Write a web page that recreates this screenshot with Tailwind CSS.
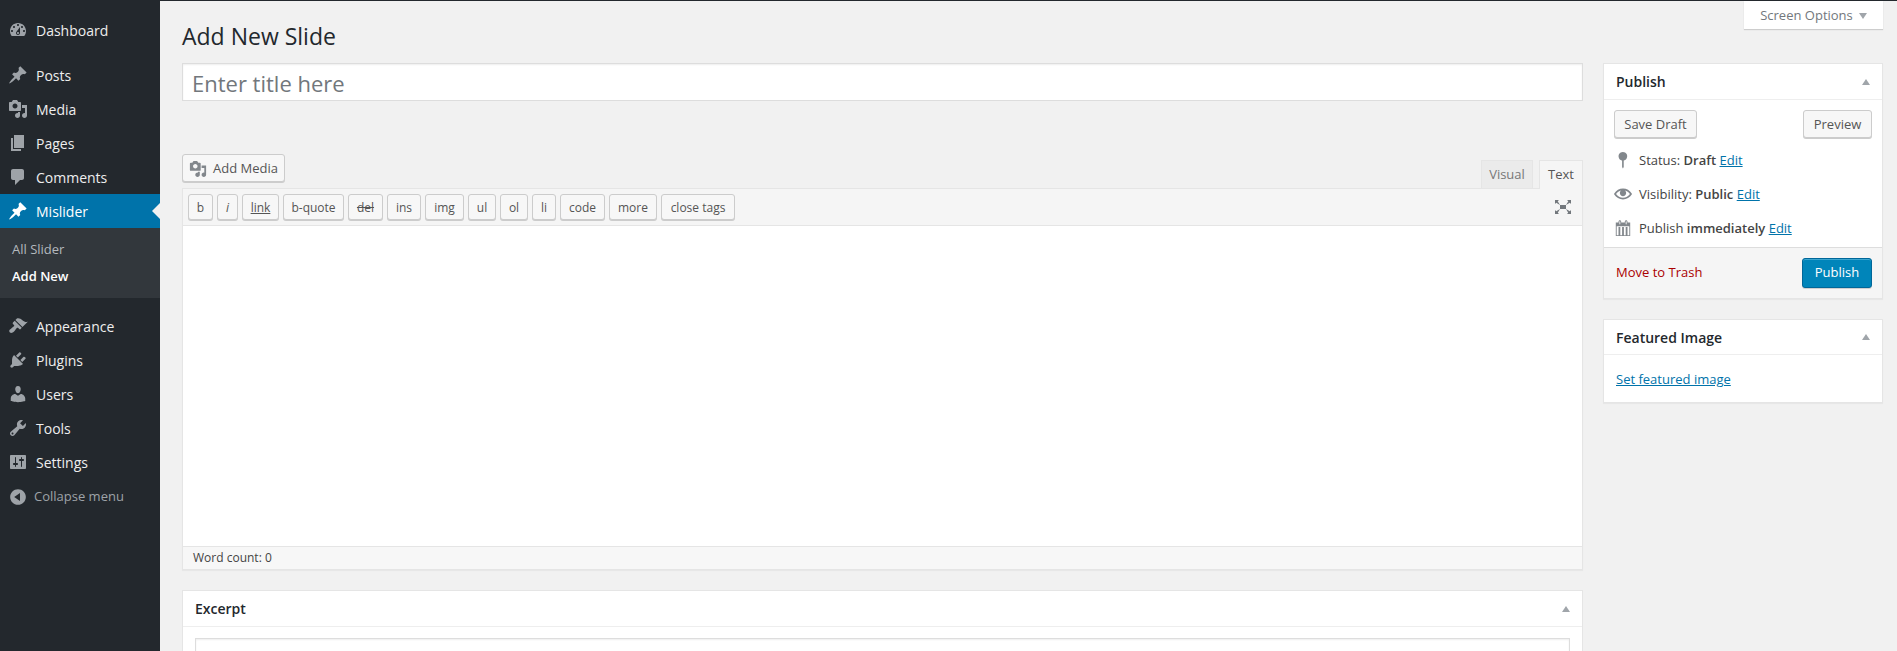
<!DOCTYPE html>
<html lang="en">
<head>
<meta charset="utf-8">
<title>Add New Slide</title>
<script src="https://cdn.jsdelivr.net/npm/@tailwindcss/browser@4"></script>
</head>
<body class="h-[651px] overflow-hidden bg-[#f1f1f1] font-['Open_Sans',sans-serif] text-[13px] text-[#444]">
<div class="h-px bg-[#23282d]"></div>
<div class="relative flex h-[650px] overflow-hidden">
  <!-- Sidebar -->
  <nav class="w-[160px] shrink-0 bg-[#23282d] pt-[12px] text-[14px] text-[#eee]">
    <a class="flex h-[34px] items-center"><svg class="ml-[8px] mr-[8px] h-[20px] w-[20px] fill-[#9ea3a8]" viewBox="0 0 20 20"><path d="M3.76 16h12.48c1.1-1.37 1.76-3.11 1.76-5 0-4.42-3.58-8-8-8s-8 3.58-8 8c0 1.89.66 3.63 1.76 5zM10 4c.55 0 1 .45 1 1s-.45 1-1 1-1-.45-1-1 .45-1 1-1zM6 6c.55 0 1 .45 1 1s-.45 1-1 1-1-.45-1-1 .45-1 1-1zm8 0c.55 0 1 .45 1 1s-.45 1-1 1-1-.45-1-1 .45-1 1-1zm-5.37 5.55L12 7v6c0 1.1-.9 2-2 2s-2-.9-2-2c0-.57.24-1.08.63-1.45zM4 10c.55 0 1 .45 1 1s-.45 1-1 1-1-.45-1-1 .45-1 1-1zm12 0c.55 0 1 .45 1 1s-.45 1-1 1-1-.45-1-1 .45-1 1-1zm-5 3c0-.55-.45-1-1-1s-1 .45-1 1 .45 1 1 1 1-.45 1-1z"/></svg>Dashboard</a>
    <a class="mt-[11px] flex h-[34px] items-center"><svg class="ml-[8px] mr-[8px] h-[20px] w-[20px] fill-[#9ea3a8]" viewBox="0 0 20 20"><path d="M10.44 3.02l1.82-1.82 6.36 6.35-1.83 1.82c-1.05-.68-2.48-.57-3.41.36l-.75.75c-.92.93-1.04 2.35-.35 3.41l-1.83 1.82-2.41-2.41-2.8 2.79c-.42.42-3.38 2.71-3.8 2.29s1.86-3.39 2.28-3.81l2.79-2.79L4.1 9.36l1.83-1.82c1.05.69 2.48.57 3.4-.36l.75-.75c.93-.92 1.05-2.35.36-3.41z"/></svg>Posts</a>
    <a class="flex h-[34px] items-center"><svg class="ml-[8px] mr-[8px] h-[20px] w-[20px] fill-[#9ea3a8]" viewBox="0 0 20 20"><path d="M13 11V4c0-.55-.45-1-1-1h-1.67L9 1H5L3.67 3H2c-.55 0-1 .45-1 1v7c0 .55.45 1 1 1h10c.55 0 1-.45 1-1zM7 4.5c1.38 0 2.5 1.12 2.5 2.5S8.38 9.5 7 9.5 4.5 8.38 4.5 7 5.62 4.5 7 4.5zM14 6h5v10.5c0 1.38-1.12 2.5-2.5 2.5S14 17.88 14 16.5s1.12-2.5 2.5-2.5c.17 0 .34.02.5.05V9h-3V6zm-4 8.05V13h2v3.5c0 1.38-1.12 2.5-2.5 2.5S7 17.88 7 16.5 8.12 14 9.5 14c.17 0 .34.02.5.05z"/></svg>Media</a>
    <a class="flex h-[34px] items-center"><svg class="ml-[8px] mr-[8px] h-[20px] w-[20px] fill-[#9ea3a8]" viewBox="0 0 20 20"><path d="M6 15V2h10v13H6zm-1 1h8v2H3V5h2v11z"/></svg>Pages</a>
    <a class="flex h-[34px] items-center"><svg class="ml-[8px] mr-[8px] h-[20px] w-[20px] fill-[#9ea3a8]" viewBox="0 0 20 20"><path d="M5 2h9c1.1 0 2 .9 2 2v7c0 1.1-.9 2-2 2h-2l-5 5v-5H5c-1.1 0-2-.9-2-2V4c0-1.1.9-2 2-2z"/></svg>Comments</a>
    <a class="relative flex h-[34px] items-center bg-[#0073aa] text-white"><svg class="ml-[8px] mr-[8px] h-[20px] w-[20px] fill-white" viewBox="0 0 20 20"><path d="M10.44 3.02l1.82-1.82 6.36 6.35-1.83 1.82c-1.05-.68-2.48-.57-3.41.36l-.75.75c-.92.93-1.04 2.35-.35 3.41l-1.83 1.82-2.41-2.41-2.8 2.79c-.42.42-3.38 2.71-3.8 2.29s1.86-3.39 2.28-3.81l2.79-2.79L4.1 9.36l1.83-1.82c1.05.69 2.48.57 3.4-.36l.75-.75c.93-.92 1.05-2.35.36-3.41z"/></svg>Mislider<span class="absolute right-0 top-[9px] border-y-[8px] border-r-[8px] border-y-transparent border-r-[#f1f1f1]"></span></a>
    <div class="h-[70px] bg-[#32373c] pl-[12px] pt-[7px] text-[13px]">
      <a class="block h-[28px] leading-[28px] text-[#b4b9be]">All Slider</a>
      <a class="block h-[26px] leading-[26px] font-semibold text-white">Add New</a>
    </div>
    <a class="mt-[11px] flex h-[34px] items-center"><svg class="ml-[8px] mr-[8px] h-[20px] w-[20px] fill-[#9ea3a8]" viewBox="0 0 20 20"><path d="M14.48 11.06L7.41 3.99l1.5-1.5c.5-.56 2.3-.47 3.51.32 1.21.8 1.43 1.28 2.91 2.1 1.18.64 2.45 1.26 4.45.85zm-.71.71L6.7 4.7 4.93 6.47c-.39.39-.39 1.02 0 1.41l1.06 1.06c.39.39.39 1.03 0 1.42-.6.6-1.43 1.11-2.21 1.69-.35.26-.7.53-1.01.84C1.43 13.23.91 14.69 1.42 15.7c.17.35.44.56.55.7.11.14.39.26.6.36.96.4 2.4-.15 3.72-1.48.3-.31.57-.66.83-1.01.57-.78 1.09-1.61 1.69-2.21.39-.39 1.02-.39 1.41 0l1.06 1.06c.39.39 1.02.39 1.41 0z"/></svg>Appearance</a>
    <a class="flex h-[34px] items-center"><svg class="ml-[8px] mr-[8px] h-[20px] w-[20px] fill-[#9ea3a8]" viewBox="0 0 20 20"><path d="M13.11 4.36L9.87 7.6 8 5.73l3.24-3.24c.35-.34 1.05-.2 1.56.32.52.51.66 1.21.31 1.55zm-8 1.77l.91-1.12 9.01 9.01-1.19.84c-.71.71-2.63 1.16-3.82 1.16H6.14L4.9 17.26c-.59.59-1.54.59-2.12 0-.59-.58-.59-1.53 0-2.12l1.24-1.24v-3.88c0-1.13.4-3.19 1.09-3.89zm7.26 3.97l3.24-3.24c.34-.35 1.04-.21 1.55.31.52.51.66 1.21.31 1.55l-3.24 3.25z"/></svg>Plugins</a>
    <a class="flex h-[34px] items-center"><svg class="ml-[8px] mr-[8px] h-[20px] w-[20px] fill-[#9ea3a8]" viewBox="0 0 20 20"><path d="M10 9.25c-2.27 0-2.73-3.44-2.73-3.44C7 4.02 7.82 2 9.97 2c2.16 0 2.98 2.02 2.71 3.81 0 0-.41 3.44-2.68 3.44zm0 2.57L12.72 10c2.39 0 4.52 2.33 4.52 4.53v2.49s-3.65 1.13-7.24 1.13c-3.65 0-7.24-1.13-7.24-1.13v-2.49c0-2.25 1.94-4.53 4.47-4.53z"/></svg>Users</a>
    <a class="flex h-[34px] items-center"><svg class="ml-[8px] mr-[8px] h-[20px] w-[20px] fill-[#9ea3a8]" viewBox="0 0 20 20"><path d="M16.68 9.77c-1.34 1.34-3.3 1.67-4.95.99l-5.41 6.52c-.99.99-2.59.99-3.58 0s-.99-2.59 0-3.57l6.52-5.42c-.68-1.65-.35-3.61.99-4.95 1.28-1.28 3.12-1.62 4.72-1.06l-2.89 2.89 2.82 2.82 2.86-2.87c.53 1.58.18 3.39-1.08 4.65zM3.81 16.21c.4.39 1.04.39 1.43 0 .4-.4.4-1.04 0-1.43-.39-.4-1.03-.4-1.43 0-.39.39-.39 1.03 0 1.43z"/></svg>Tools</a>
    <a class="flex h-[34px] items-center"><svg class="ml-[8px] mr-[8px] h-[20px] w-[20px] fill-[#9ea3a8]" viewBox="0 0 20 20"><path d="M18 16V4c0-.55-.45-1-1-1H3c-.55 0-1 .45-1 1v12c0 .55.45 1 1 1h14c.55 0 1-.45 1-1zM8 11h1c.55 0 1 .45 1 1s-.45 1-1 1H8v1.5c0 .28-.22.5-.5.5s-.5-.22-.5-.5V13H6c-.55 0-1-.45-1-1s.45-1 1-1h1V5.5c0-.28.22-.5.5-.5s.5.22.5.5V11zm5-2h-1c-.55 0-1-.45-1-1s.45-1 1-1h1V5.5c0-.28.22-.5.5-.5s.5.22.5.5V7h1c.55 0 1 .45 1 1s-.45 1-1 1h-1v5.5c0 .28-.22.5-.5.5s-.5-.22-.5-.5V9z"/></svg>Settings</a>
    <a class="flex h-[34px] items-center pt-[1px] text-[13px] text-[#9ea3a8]"><svg class="ml-[8px] mr-[6px] h-[20px] w-[20px] fill-[#9ea3a8]" viewBox="0 0 20 20"><path d="M10 2.16c4.33 0 7.84 3.51 7.84 7.84s-3.51 7.84-7.84 7.84S2.16 14.33 2.16 10 5.71 2.16 10 2.16zm2 11.72V6.12L6.18 9.97z"/></svg>Collapse menu</a>
  </nav>

  <!-- Content -->
  <main class="flex min-w-0 flex-1 gap-[20px] pl-[22px] pr-[14px]">
    <div class="w-[1401px] shrink-0">
      <h1 class="flex h-[62px] items-center pt-[8px] text-[23px] leading-[29px] font-normal text-[#23282d]">Add New Slide</h1>
      <div class="flex h-[38px] items-center border border-[#ddd] bg-white pl-[9px] pt-[3px] text-[22px] text-[#72777c] shadow-[inset_0_1px_2px_rgba(0,0,0,0.07)]">Enter title here</div>

      <div class="mt-[53px] flex h-[34px] items-start justify-between">
        <button class="flex h-[28px] w-[103px] items-center rounded-[3px] border border-[#ccc] bg-[#f7f7f7] pl-[6px] pt-[1px] text-[#555] shadow-[0_1px_0_#ccc]"><svg class="mr-[6px] h-[18px] w-[18px] fill-[#82878c]" viewBox="0 0 20 20"><path d="M13 11V4c0-.55-.45-1-1-1h-1.67L9 1H5L3.67 3H2c-.55 0-1 .45-1 1v7c0 .55.45 1 1 1h10c.55 0 1-.45 1-1zM7 4.5c1.38 0 2.5 1.12 2.5 2.5S8.38 9.5 7 9.5 4.5 8.38 4.5 7 5.62 4.5 7 4.5zM14 6h5v10.5c0 1.38-1.12 2.5-2.5 2.5S14 17.88 14 16.5s1.12-2.5 2.5-2.5c.17 0 .34.02.5.05V9h-3V6zm-4 8.05V13h2v3.5c0 1.38-1.12 2.5-2.5 2.5S7 17.88 7 16.5 8.12 14 9.5 14c.17 0 .34.02.5.05z"/></svg>Add Media</button>
        <div class="mt-[6px] flex items-start">
          <span class="flex h-[28px] w-[52px] items-center justify-center border border-[#e5e5e5] border-b-0 bg-[#ebebeb] text-[#777]">Visual</span>
          <span class="z-10 ml-[6px] flex h-[29px] w-[44px] items-center justify-center border border-[#e5e5e5] border-b-0 bg-[#f5f5f5] text-[#555]">Text</span>
        </div>
      </div>

      <div class="border border-[#e5e5e5] bg-white shadow-[0_1px_1px_rgba(0,0,0,0.04)]">
        <div class="flex h-[37px] items-start justify-between border-b border-[#e5e5e5] bg-[#f5f5f5] pl-[5px] pr-[9px] pt-[5px]">
          <div class="flex gap-[4px] text-[12px] text-[#555]">
            <button class="h-[26px] w-[25px] rounded-[3px] border border-[#ccc] bg-[#f7f7f7] pt-px shadow-[0_1px_0_#ccc]">b</button>
            <button class="h-[26px] w-[21px] rounded-[3px] border border-[#ccc] bg-[#f7f7f7] pt-px italic shadow-[0_1px_0_#ccc]">i</button>
            <button class="h-[26px] w-[37px] rounded-[3px] border border-[#ccc] bg-[#f7f7f7] pt-px underline shadow-[0_1px_0_#ccc]">link</button>
            <button class="h-[26px] w-[61px] rounded-[3px] border border-[#ccc] bg-[#f7f7f7] pt-px shadow-[0_1px_0_#ccc]">b-quote</button>
            <button class="h-[26px] w-[35px] rounded-[3px] border border-[#ccc] bg-[#f7f7f7] pt-px line-through shadow-[0_1px_0_#ccc]">del</button>
            <button class="h-[26px] w-[34px] rounded-[3px] border border-[#ccc] bg-[#f7f7f7] pt-px shadow-[0_1px_0_#ccc]">ins</button>
            <button class="h-[26px] w-[39px] rounded-[3px] border border-[#ccc] bg-[#f7f7f7] pt-px shadow-[0_1px_0_#ccc]">img</button>
            <button class="h-[26px] w-[28px] rounded-[3px] border border-[#ccc] bg-[#f7f7f7] pt-px shadow-[0_1px_0_#ccc]">ul</button>
            <button class="h-[26px] w-[28px] rounded-[3px] border border-[#ccc] bg-[#f7f7f7] pt-px shadow-[0_1px_0_#ccc]">ol</button>
            <button class="h-[26px] w-[24px] rounded-[3px] border border-[#ccc] bg-[#f7f7f7] pt-px shadow-[0_1px_0_#ccc]">li</button>
            <button class="h-[26px] w-[45px] rounded-[3px] border border-[#ccc] bg-[#f7f7f7] pt-px shadow-[0_1px_0_#ccc]">code</button>
            <button class="h-[26px] w-[48px] rounded-[3px] border border-[#ccc] bg-[#f7f7f7] pt-px shadow-[0_1px_0_#ccc]">more</button>
            <button class="h-[26px] w-[74px] rounded-[3px] border border-[#ccc] bg-[#f7f7f7] pt-px shadow-[0_1px_0_#ccc]">close tags</button>
          </div>
          <svg class="mt-[3px] h-[20px] w-[20px] fill-[#72777c]" viewBox="0 0 20 20"><path d="M7 8h6v4H7zm-5 5v4h4l-1.2-1.2L7 12l-3.8 2.2M14 17h4v-4l-1.2 1.2L13 12l2.2 3.8M14 3l1.3 1.3L13 8l3.8-2.2L18 7V3M6 3H2v4l1.2-1.2L7 8 4.7 4.3"/></svg>
        </div>
        <div class="h-[320px] bg-white"></div>
        <div class="flex h-[23px] items-center border-t border-[#e5e5e5] bg-[#f7f7f7] pl-[10px] text-[12px] text-[#444]">Word count: 0</div>
      </div>

      <section class="mt-[20px] border border-[#e5e5e5] bg-white">
        <div class="flex h-[36px] items-center justify-between border-b border-[#eee] pl-[12px] pr-[12px]">
          <h2 class="text-[14px] font-semibold text-[#23282d]">Excerpt</h2>
          <span class="border-x-[4px] border-b-[6px] border-x-transparent border-b-[#a0a5aa]"></span>
        </div>
        <div class="px-[12px] pt-[11px]"><div class="h-[60px] border border-[#ddd] bg-white shadow-[inset_0_1px_2px_rgba(0,0,0,0.07)]"></div></div>
      </section>
    </div>

    <aside class="w-[280px] shrink-0 pt-[62px]">
      <section class="border border-[#e5e5e5] bg-white shadow-[0_1px_1px_rgba(0,0,0,0.04)]">
        <div class="flex h-[36px] items-center justify-between border-b border-[#eee] pl-[12px] pr-[12px]">
          <h2 class="text-[14px] font-semibold text-[#23282d]">Publish</h2>
          <span class="border-x-[4px] border-b-[6px] border-x-transparent border-b-[#a0a5aa]"></span>
        </div>
        <div class="flex justify-between px-[10px] pt-[10px]">
          <button class="h-[28px] w-[83px] rounded-[3px] border border-[#ccc] bg-[#f7f7f7] pt-[1px] text-[#555] shadow-[0_1px_0_#ccc]">Save Draft</button>
          <button class="h-[28px] w-[69px] rounded-[3px] border border-[#ccc] bg-[#f7f7f7] pt-[1px] text-[#555] shadow-[0_1px_0_#ccc]">Preview</button>
        </div>
        <div class="mt-[5px] flex h-[34px] items-center pl-[10px]"><svg class="mr-[7px] h-[18px] w-[18px] fill-[#82878c]" viewBox="0 0 20 20"><path d="M9.8 1a4.8 4.8 0 1 0 .1 0zM9 10.5h1.8v7.4l-.9 1.6-.9-1.6z"/></svg><span class="pt-px">Status: <b class="font-semibold">Draft</b> <a class="text-[#0073aa] underline">Edit</a></span></div>
        <div class="flex h-[34px] items-center pl-[10px]"><svg class="mr-[7px] h-[18px] w-[18px] fill-[#82878c]" viewBox="0 0 20 20"><path d="M19.7 9.4C17.7 6 14 3.9 10 3.9S2.3 6 .3 9.4L0 10l.3.6c2 3.4 5.7 5.5 9.7 5.5s7.7-2.1 9.7-5.5l.3-.6-.3-.6zM10 14.1c-3.1 0-6-1.6-7.7-4.1C3.6 8 5.7 6.6 8 6.1c-.9.6-1.5 1.7-1.5 2.9 0 1.9 1.6 3.5 3.5 3.5s3.5-1.6 3.5-3.5c0-1.2-.6-2.3-1.5-2.9 2.3.5 4.4 1.9 5.7 3.9-1.7 2.5-4.6 4.1-7.7 4.1z"/></svg><span class="pt-px">Visibility: <b class="font-semibold">Public</b> <a class="text-[#0073aa] underline">Edit</a></span></div>
        <div class="flex h-[34px] items-center pl-[10px]"><svg class="mr-[7px] h-[18px] w-[18px] fill-[#82878c]" viewBox="0 0 20 20"><path d="M15 4h3v15H2V4h3V3c0-.41.15-.76.44-1.06.29-.29.65-.44 1.06-.44s.77.15 1.06.44c.29.3.44.65.44 1.06v1h4V3c0-.41.15-.76.44-1.06.29-.29.65-.44 1.06-.44s.77.15 1.06.44c.29.3.44.65.44 1.06v1zM6 3v2.5c0 .14.05.26.15.36.09.09.21.14.35.14s.26-.05.35-.14c.1-.1.15-.22.15-.36V3c0-.14-.05-.26-.15-.35-.09-.1-.21-.15-.35-.15s-.26.05-.35.15c-.1.09-.15.21-.15.35zm7 0v2.5c0 .14.05.26.14.36.1.09.22.14.36.14s.26-.05.36-.14c.09-.1.14-.22.14-.36V3c0-.14-.05-.26-.14-.35-.1-.1-.22-.15-.36-.15s-.26.05-.36.15c-.09.09-.14.21-.14.35zm4 15V8H3v10h14zM7 9v9H5V9zm4 0v9H9V9zm4 0v9h-2V9z"/></svg><span class="pt-px">Publish <b class="font-semibold">immediately</b> <a class="text-[#0073aa] underline">Edit</a></span></div>
        <div class="mt-[2px] flex h-[51px] items-center justify-between border-t border-[#ddd] bg-[#f5f5f5] pl-[12px] pr-[10px]">
          <a class="text-[#a00]">Move to Trash</a>
          <button class="h-[30px] w-[70px] rounded-[3px] border border-[#006799] bg-[#0085ba] text-white shadow-[inset_0_1px_0_rgba(120,200,230,0.5),0_1px_0_rgba(0,0,0,0.15)]">Publish</button>
        </div>
      </section>

      <section class="mt-[20px] border border-[#e5e5e5] bg-white shadow-[0_1px_1px_rgba(0,0,0,0.04)]">
        <div class="flex h-[35px] items-center justify-between border-b border-[#eee] pl-[12px] pr-[12px]">
          <h2 class="text-[14px] font-semibold text-[#23282d]">Featured Image</h2>
          <span class="border-x-[4px] border-b-[6px] border-x-transparent border-b-[#a0a5aa]"></span>
        </div>
        <div class="flex h-[47px] items-center pl-[12px] pt-[2px]"><a class="text-[#0073aa] underline">Set featured image</a></div>
      </section>
    </aside>
  </main>

  <button class="absolute right-[14px] top-0 flex h-[28px] w-[139px] items-center justify-center gap-[6px] bg-white pt-[1px] text-[#72777c] shadow-[0_1px_1px_rgba(0,0,0,0.15)]">Screen Options<span class="border-x-[4px] border-t-[6px] border-x-transparent border-t-[#a0a5aa]"></span></button>
</div>
</body>
</html>
